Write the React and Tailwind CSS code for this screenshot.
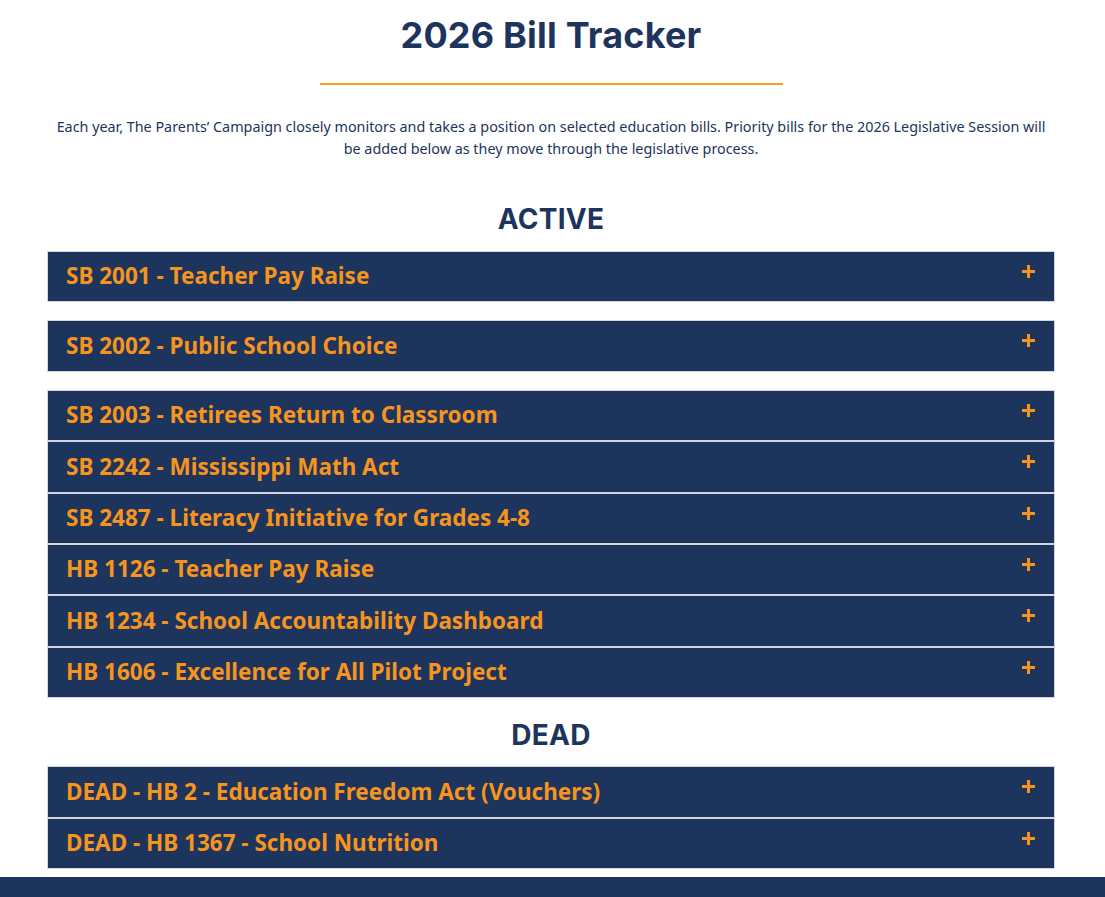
const ACTIVE_TOP = [
  "SB 2001 - Teacher Pay Raise",
  "SB 2002 - Public School Choice",
];

const ACTIVE_GROUP = [
  "SB 2003 - Retirees Return to Classroom",
  "SB 2242 - Mississippi Math Act",
  "SB 2487 - Literacy Initiative for Grades 4-8",
  "HB 1126 - Teacher Pay Raise",
  "HB 1234 - School Accountability Dashboard",
  "HB 1606 - Excellence for All Pilot Project",
];

const DEAD = [
  "DEAD - HB 2 - Education Freedom Act (Vouchers)",
  "DEAD - HB 1367 - School Nutrition",
];

const PlusIcon = () => (
  <svg width="13" height="13" viewBox="0 0 13 13" className="self-start mt-[13px]">
    <path d="M0 6.5h13M6.5 0v13" stroke="#f7941d" strokeWidth="3" />
  </svg>
);

const BillRow = ({ title, className = "" }) => (
  <div
    className={`flex items-center justify-between h-[51.4px] bg-[#1d345c] border border-[#d3d7dd] pl-[18px] pr-[19px] ${className}`}
  >
    <span className="text-[#f7941d] text-[22.5px] font-bold font-['Noto_Sans',sans-serif] leading-none">
      {title}
    </span>
    <PlusIcon />
  </div>
);

const SectionHeading = ({ children, className = "" }) => (
  <h2
    className={`text-center text-[#1d345c] text-[28px] font-bold font-['Inter',sans-serif] leading-none tracking-[0.3px] ${className}`}
  >
    {children}
  </h2>
);

export default function App() {
  return (
    <div className="min-h-screen bg-white font-['Noto_Sans',sans-serif]">
      <div className="w-[1008px] ml-[47px] pt-[17px]">
        <h1 className="text-center text-[#1d345c] text-[36px] font-bold font-['Inter',sans-serif] leading-none tracking-[0.2px]">
          2026 Bill Tracker
        </h1>
        <div className="w-[463px] h-[2px] bg-[#f7a01d] mx-auto mt-[30px]" />

        <p className="mt-[31px] mx-auto w-[996px] text-center text-[#1d345c] text-[14.35px] leading-[22px]">
          Each year, The Parents’ Campaign closely monitors and takes a position on selected education bills. Priority bills for the 2026 Legislative Session will be added below as they move through the legislative process.
        </p>

        <SectionHeading className="mt-[45px] mb-[18px]">ACTIVE</SectionHeading>

        <div className="flex flex-col">
          {ACTIVE_TOP.map((t) => (
            <BillRow key={t} title={t} className="mb-[18px]" />
          ))}
          {ACTIVE_GROUP.map((t) => (
            <BillRow key={t} title={t} />
          ))}
        </div>

        <SectionHeading className="mt-[23px] mb-[17px]">DEAD</SectionHeading>

        <div className="flex flex-col">
          {DEAD.map((t) => (
            <BillRow key={t} title={t} />
          ))}
        </div>
      </div>

      <div className="mt-[8px] h-[120px] bg-[#1d345c]" />
    </div>
  );
}
